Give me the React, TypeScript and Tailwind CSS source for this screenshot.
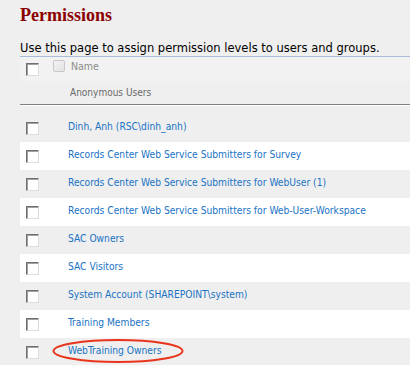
const groups = [
  'Dinh, Anh (RSC\\dinh_anh)',
  'Records Center Web Service Submitters for Survey',
  'Records Center Web Service Submitters for WebUser (1)',
  'Records Center Web Service Submitters for Web-User-Workspace',
  'SAC Owners',
  'SAC Visitors',
  'System Account (SHAREPOINT\\system)',
  'Training Members',
  'WebTraining Owners',
]

function Box() {
  return (
    <span className="block h-[13px] w-[13px] border border-b-[#dcdcdc] border-l-[#6f6f6f] border-r-[#dcdcdc] border-t-[#6f6f6f] bg-white shadow-[inset_1px_1px_0_#a0a0a0]" />
  )
}

export default function App() {
  return (
    <div className="h-[365px] w-[410px] overflow-hidden bg-[#efefef] pl-5 font-['DejaVu_Sans',Verdana,sans-serif]">
      <h1 className="pt-[5px] font-['Liberation_Serif',serif] text-[18px] font-bold leading-[20px] text-[#8b0000]">
        Permissions
      </h1>
      <p className="mt-[16px] border-b border-[#a9bbd6] pb-[1px] text-[11.5px] leading-[14px] text-black">
        Use this page to assign permission levels to users and groups.
      </p>

      <div className="flex h-[24px] items-center bg-[#f2f2f2] font-['DejaVu_Sans_Condensed','DejaVu_Sans',sans-serif]">
        <span className="ml-[6px]">
          <Box />
        </span>
        <span className="ml-[14px] -mt-[6px] block h-[12px] w-[12px] rounded-[2px] border border-[#c8c8c8] bg-gradient-to-br from-[#f4f4f4] to-[#e2e2e2]" />
        <span className="ml-[6px] -mt-[4px] text-[10.5px] text-[#8c8c8c]">Name</span>
      </div>
      <div className="flex h-[24px] items-center border-b border-[#808080] pl-[50px] font-['DejaVu_Sans_Condensed','DejaVu_Sans',sans-serif] text-[10px] text-[#6a6a6a]">
        Anonymous Users
      </div>
      <div className="h-[1px] bg-white" />
      <div className="h-[8px]" />

      {groups.map((g, i) => (
        <div key={g} className={`relative flex h-[28px] items-center ${i % 2 ? 'bg-white' : 'bg-[#efefef]'}`}>
          <span className="ml-[6px]">
            <Box />
          </span>
          <a className="ml-[29px] -mt-[2px] font-['DejaVu_Sans_Condensed','DejaVu_Sans',sans-serif] text-[10.2px] text-[#1a73c4]">{g}</a>
          {g === 'WebTraining Owners' && (
            <svg className="absolute left-[32px] top-[0px]" width="132" height="26" viewBox="0 0 132 26">
              <ellipse cx="66" cy="13" rx="64.5" ry="11" fill="none" stroke="#e8341c" strokeWidth="2" />
            </svg>
          )}
        </div>
      ))}
    </div>
  )
}
